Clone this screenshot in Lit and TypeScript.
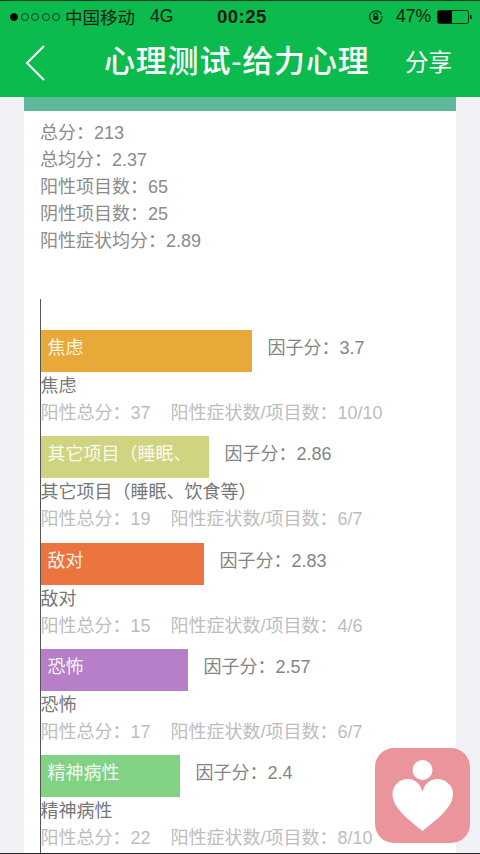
import { LitElement, html, css } from "lit";
import { customElement } from "lit/decorators.js";

interface Factor {
  label: string;
  barLabel: string;
  score: string;
  width: number;
  color: string;
  total: number;
  ratio: string;
}

const factors: Factor[] = [
  { label: "焦虑", barLabel: "焦虑", score: "3.7", width: 211, color: "#e9a938", total: 37, ratio: "10/10" },
  { label: "其它项目（睡眠、饮食等）", barLabel: "其它项目（睡眠、", score: "2.86", width: 168, color: "#d0d480", total: 19, ratio: "6/7" },
  { label: "敌对", barLabel: "敌对", score: "2.83", width: 163, color: "#ec753f", total: 15, ratio: "4/6" },
  { label: "恐怖", barLabel: "恐怖", score: "2.57", width: 147, color: "#b67fc8", total: 17, ratio: "6/7" },
  { label: "精神病性", barLabel: "精神病性", score: "2.4", width: 139, color: "#82d286", total: 22, ratio: "8/10" },
];

const summary = [
  ["总分", "213"],
  ["总均分", "2.37"],
  ["阳性项目数", "65"],
  ["阴性项目数", "25"],
  ["阳性症状均分", "2.89"],
];

@customElement("app-root")
export class AppRoot extends LitElement {
  static styles = css`
    :host {
      display: block;
      width: 480px;
      height: 854px;
      position: relative;
      overflow: hidden;
      background: #f1f1f6;
      font-family: "Liberation Sans", "Noto Sans CJK SC", sans-serif;
    }
    .page { display: flex; flex-direction: column; height: 854px; border-bottom: 1px solid #222; box-sizing: border-box; }
    .header {
      flex: none;
      height: 97px;
      box-sizing: border-box;
      background: #0bbb4e;
      border-top: 1px solid #1c3a28;
      display: flex;
      flex-direction: column;
    }
    .status {
      height: 31px;
      display: flex;
      align-items: center;
      position: relative;
      color: #0c1a10;
      font-size: 17.5px;
      padding: 0 0 0 10px;
    }
    .dots { display: flex; gap: 2.5px; margin-right: 5px; }
    .dot { width: 8px; height: 8px; box-sizing: border-box; border-radius: 50%; border: 1px solid #0c3a1e; }
    .dot.on { background: #000; border-color: #000; }
    .net { margin-left: 15px; }
    .time { position: absolute; left: 217px; font-weight: 700; font-size: 18.5px; letter-spacing: 0.5px; }
    .status-right { margin-left: auto; display: flex; align-items: center; margin-right: 7px; }
    .pct { margin: 0 6px 0 12px; font-size: 17.5px; }
    .nav { flex: 1; display: flex; align-items: center; color: #fff; position: relative; padding-bottom: 4px; }
    .back { margin-left: 24px; width: 22px; height: 38px; display: block; }
    .title { position: absolute; left: 104px; top: 8px; font-size: 31px; line-height: 44px; letter-spacing: 0.8px; font-weight: 500; white-space: nowrap; }
    .share { position: absolute; left: 405px; top: 14px; font-size: 23.5px; line-height: 34px; white-space: nowrap; }

    .card {
      flex: 1;
      min-height: 0;
      margin: 0 24px;
      background: #fff;
      display: flex;
      flex-direction: column;
      overflow: hidden;
    }
    .band { flex: none; height: 14px; background: #5fb899; }
    .summary { padding: 9px 16px 0; color: #8b8b8b; font-size: 18px; line-height: 27px; }
    .chart {
      flex: 1;
      margin: 44px 0 0 15.500px;
      border-left: 1px solid #555;
      padding-top: 31px;
      display: flex;
      flex-direction: column;
      gap: 9.25px;
    }
    .factor { flex: none; }
    .bar-row { display: flex; align-items: flex-start; gap: 16px; height: 42px; line-height: 36px; }
    .bar {
      height: 42px;
      color: rgba(255, 255, 255, 0.92);
      font-size: 18px;
      padding-left: 7px;
      box-sizing: border-box;
      overflow: hidden;
      white-space: nowrap;
    }
    .score { color: #858585; font-size: 18px; white-space: nowrap; }
    .name { color: #777; font-size: 18px; line-height: 27px; padding-top: 1px; white-space: nowrap; }
    .meta { color: #bdbdbd; font-size: 18px; line-height: 27px; white-space: nowrap; display: flex; gap: 20px; }
    .fab { position: absolute; left: 374.500px; top: 748px; width: 95px; height: 95px; display: block; }
  `;

  render() {
    return html`
      <div class="page">
        <div class="header">
          <div class="status">
            <div class="dots">
              ${[1, 0, 0, 0, 0].map((on) => html`<span class="dot ${on ? "on" : ""}"></span>`)}
            </div>
            <span>中国移动</span><span class="net">4G</span>
            <span class="time">00:25</span>
            <div class="status-right">
              <svg width="16" height="16" viewBox="0 0 16 16" fill="none" stroke="#0c2a16" stroke-width="1.2">
                <path d="M13.6 5.5A6.3 6.3 0 1 0 14 9.5" />
                <path d="M12.6 7.4l2.6 0-1.3 1.6z" fill="#0c2a16" stroke="none" />
                <rect x="5.2" y="7" width="5" height="4" rx="0.6" fill="#0c2a16" stroke="none" />
                <path d="M6 7V5.8a1.7 1.7 0 0 1 3.4 0V7" />
              </svg>
              <span class="pct">47%</span>
              <svg width="36" height="14" viewBox="0 0 36 14">
                <rect x="0.5" y="0.5" width="31" height="13" rx="2" fill="none" stroke="#0c2a16" stroke-width="1" />
                <rect x="1" y="1" width="14" height="12" fill="#000" />
                <rect x="33" y="5" width="1.6" height="4" fill="#0c2a16" />
              </svg>
            </div>
          </div>
          <div class="nav">
            <svg class="back" viewBox="0 0 22 38" fill="none" stroke="#fff" stroke-width="2">
              <path d="M20 2 3 19l17 17" />
            </svg>
            <span class="title">心理测试-给力心理</span>
            <span class="share">分享</span>
          </div>
        </div>
        <div class="card">
          <div class="band"></div>
          <div class="summary">
            ${summary.map(([k, v]) => html`<div>${k}：${v}</div>`)}
          </div>
          <div class="chart">
            ${factors.map(
              (f) => html`
                <div class="factor">
                  <div class="bar-row">
                    <div class="bar" style="width:${f.width}px;background:${f.color}">${f.barLabel}</div>
                    <div class="score">因子分：${f.score}</div>
                  </div>
                  <div class="name">${f.label}</div>
                  <div class="meta"><span>阳性总分：${f.total}</span><span>阳性症状数/项目数：${f.ratio}</span></div>
                </div>
              `,
            )}
          </div>
        </div>
      </div>
      <svg class="fab" viewBox="0 0 95 95">
        <rect width="95" height="95" rx="19" fill="#ea959c" />
        <circle cx="47.500" cy="22" r="10" fill="#fff" />
        <path fill="#fff" d="M47.500 83C34 72 17.500 60 17.500 46 17.500 37 25 31 33 31c7 0 12.500 5 14.500 13C49.500 36 55 31 62 31c8 0 16 6 16 15 0 14-17 26-30.500 37z" />
      </svg>
    `;
  }
}
